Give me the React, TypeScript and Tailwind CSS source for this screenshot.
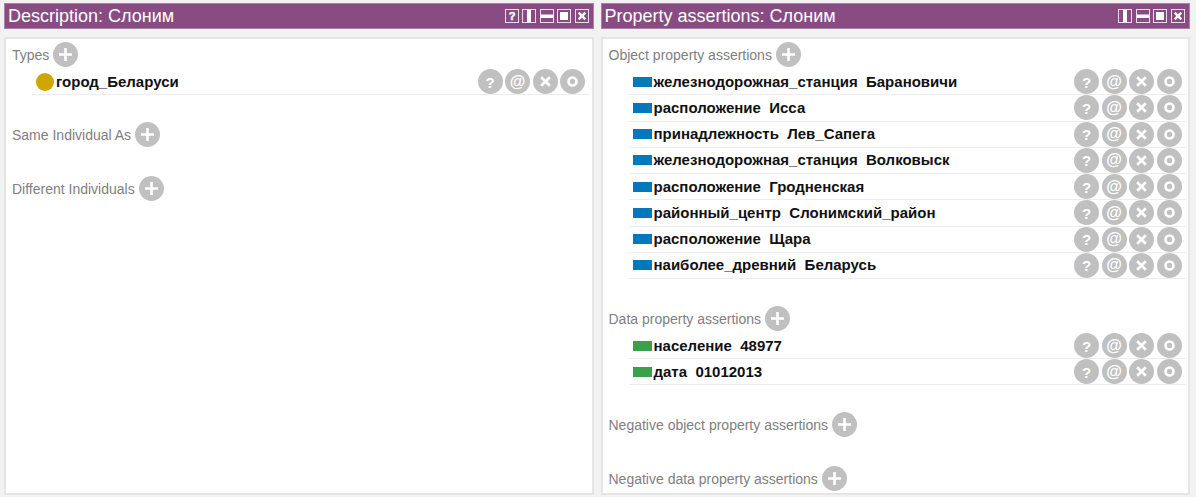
import type { ReactNode } from "react";
import clsx from "clsx";

type EntityKind = "class" | "object" | "data";
type Assertion = { kind: EntityKind; text: string };
type SectionData = { title: string; items: Assertion[]; listClass?: string };
type WindowAction = "help" | "columns" | "rows" | "float" | "close";

const descriptionSections: SectionData[] = [
  { title: "Types", items: [{ kind: "class", text: "город_Беларуси" }] },
  { title: "Same Individual As", items: [] },
  { title: "Different Individuals", items: [] },
];

const objectAssertions = [
  "железнодорожная_станция  Барановичи",
  "расположение  Исса",
  "принадлежность  Лев_Сапега",
  "железнодорожная_станция  Волковыск",
  "расположение  Гродненская",
  "районный_центр  Слонимский_район",
  "расположение  Щара",
  "наиболее_древний  Беларусь",
];

const propertySections: SectionData[] = [
  {
    title: "Object property assertions",
    items: objectAssertions.map((text) => ({ kind: "object", text })),
    listClass: "min-h-[210px]",
  },
  {
    title: "Data property assertions",
    items: [
      { kind: "data", text: "население  48977" },
      { kind: "data", text: "дата  01012013" },
    ],
  },
  { title: "Negative object property assertions", items: [] },
  { title: "Negative data property assertions", items: [] },
];

const windowLabels: Record<WindowAction, string> = {
  help: "Help",
  columns: "Split vertically",
  rows: "Split horizontally",
  float: "Float view",
  close: "Close view",
};

function WindowGlyph({ action }: { action: WindowAction }) {
  return (
    <svg viewBox="0 0 14 14" className="size-3.5" aria-hidden="true">
      <rect x="0.5" y="0.5" width="13" height="13" fill="none" stroke="#e9dde8" />
      {action === "help" && (
        <text x="7" y="11" textAnchor="middle" fontSize="11" fontWeight="700" fill="#fff" stroke="#fff" strokeWidth="0.4">
          ?
        </text>
      )}
      {action === "columns" && <rect x="5" y="1" width="4" height="12" fill="#fff" />}
      {action === "rows" && <rect x="1" y="5.5" width="12" height="3.5" fill="#fff" />}
      {action === "float" && <rect x="3" y="3" width="8" height="8" fill="#fff" />}
      {action === "close" && <path d="M3.6 3.6l6.8 6.8M10.4 3.6l-6.8 6.8" stroke="#fff" strokeWidth="2.5" />}
    </svg>
  );
}

function RoundButton({ label, children }: { label: string; children: ReactNode }) {
  return (
    <button
      type="button"
      aria-label={label}
      className="flex size-[25px] shrink-0 items-center justify-center rounded-full bg-[#c0c0c0] text-white"
    >
      {children}
    </button>
  );
}

function EntityIcon({ kind }: { kind: EntityKind }) {
  if (kind === "class") return <span className="size-[18px] shrink-0 rounded-full bg-[#cfa500]" />;
  return (
    <span className={clsx("h-2.5 w-[19px] shrink-0", kind === "object" ? "bg-[#0079ba]" : "bg-[#38a14a]")} />
  );
}

function AssertionRow({ item }: { item: Assertion }) {
  return (
    <li className="flex min-h-[26px] items-center border-b border-[#ededed] pr-1 pl-1">
      <EntityIcon kind={item.kind} />
      <span className="grow pl-0.5 text-[15px] leading-5 font-bold whitespace-pre text-[#111]">{item.text}</span>
      <span className="flex w-27 shrink-0 justify-between">
        <RoundButton label="Explain">
          <span className="pt-0.5 text-[15px] leading-5 font-bold">?</span>
        </RoundButton>
        <RoundButton label="Annotate">
          <span className="text-[16px] leading-5 font-bold">@</span>
        </RoundButton>
        <RoundButton label="Delete">
          <svg viewBox="0 0 25 25" className="size-[25px]" aria-hidden="true">
            <path d="M8.2 8.2l8.6 8.6M16.8 8.2l-8.6 8.6" stroke="#fff" strokeWidth="2.7" />
          </svg>
        </RoundButton>
        <RoundButton label="Edit">
          <svg viewBox="0 0 25 25" className="size-[25px]" aria-hidden="true">
            <circle cx="12.5" cy="12.5" r="4" fill="none" stroke="#fff" strokeWidth="2.6" />
          </svg>
        </RoundButton>
      </span>
    </li>
  );
}

function Section({ section }: { section: SectionData }) {
  return (
    <section className="flex flex-col gap-0.5 pb-[26px] last:pb-0">
      <div className="flex h-[26px] items-center gap-1 pl-1.5">
        <h2 className="pt-0.5 text-[14px] leading-5 text-[#808080]">{section.title}</h2>
        <RoundButton label={`Add to ${section.title}`}>
          <svg viewBox="0 0 25 25" className="size-[25px]" aria-hidden="true">
            <path d="M12.5 6v13M6 12.5h13" stroke="#fff" strokeWidth="2.6" />
          </svg>
        </RoundButton>
      </div>
      <ul className={clsx("ml-[26px] grid auto-rows-fr", section.listClass)}>
        {section.items.map((item) => (
          <AssertionRow key={item.text} item={item} />
        ))}
      </ul>
    </section>
  );
}

function Panel({
  title,
  actions,
  actionsClass,
  sections,
}: {
  title: string;
  actions: WindowAction[];
  actionsClass: string;
  sections: SectionData[];
}) {
  return (
    <article className="flex min-w-0 flex-col gap-2">
      <header className="flex h-[26px] items-center justify-between border border-[#ab80a7] bg-[#884c82] pr-1 pl-[3px]">
        <h1 className="text-[18px] leading-6 text-white">{title}</h1>
        <div className={clsx("flex justify-between", actionsClass)}>
          {actions.map((action) => (
            <button key={action} type="button" aria-label={windowLabels[action]}>
              <WindowGlyph action={action} />
            </button>
          ))}
        </div>
      </header>
      <div className="grow border-2 border-[#e5e5e5] bg-white pt-0.5 pr-0.5">
        {sections.map((section) => (
          <Section key={section.title} section={section} />
        ))}
      </div>
    </article>
  );
}

export default function App() {
  return (
    <main
      className="grid min-h-screen grid-cols-2 gap-[7px] bg-[#f2f2f2] pt-[3px] pr-1.5 pb-0.5 pl-1"
      style={{ fontFamily: '"Liberation Sans", Arial, sans-serif' }}
    >
      <Panel
        title="Description: Слоним"
        actions={["help", "columns", "rows", "float", "close"]}
        actionsClass="w-[84px]"
        sections={descriptionSections}
      />
      <Panel
        title="Property assertions: Слоним"
        actions={["columns", "rows", "float", "close"]}
        actionsClass="w-[67px]"
        sections={propertySections}
      />
    </main>
  );
}
